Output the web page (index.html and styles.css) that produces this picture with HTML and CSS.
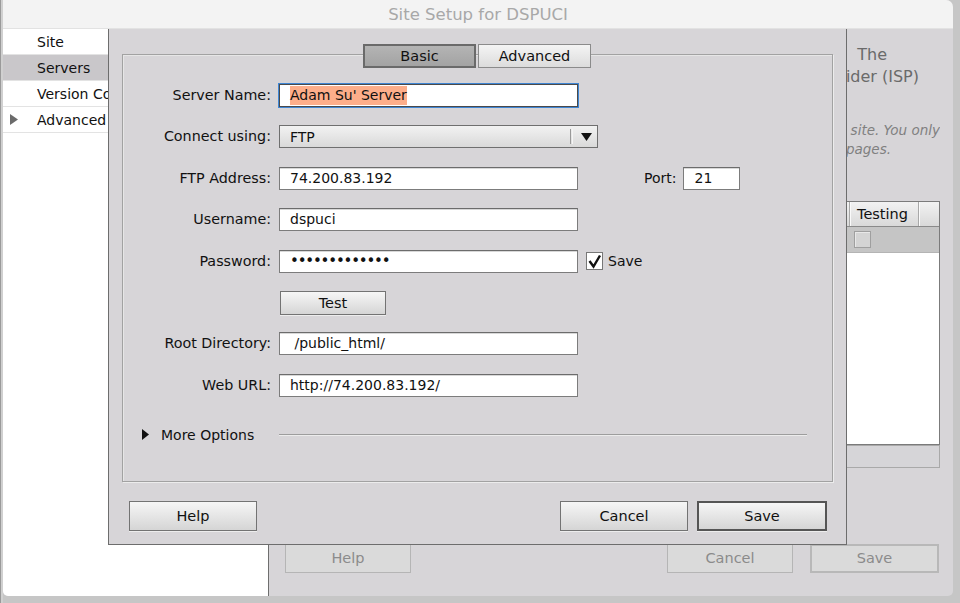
FILE: index.html
```html
<!DOCTYPE html>
<html>
<head>
<meta charset="utf-8">
<link rel="stylesheet" href="styles.css">
</head>
<body>
<div class="window">
  <div class="titlebar">Site Setup for DSPUCI</div>
  <div class="content">
    <div class="sidebar">
      <div class="navitem">Site</div>
      <div class="navitem selected">Servers</div>
      <div class="navitem">Version Control</div>
      <div class="navitem expander"><svg class="disclosure" width="8" height="11" viewBox="0 0 8 11"><path d="M0 0 L8 5.5 L0 11 Z" fill="#6b6b6b"/></svg>Advanced Settings</div>
    </div>
    <div class="main">
      <div class="desc l1"><span>Here you'll select the server that will host your pages on the web.<span class="gap">The</span></span></div>
      <div class="desc l2"><span>settings for this dialog box come from your Internet Service Provider (ISP)</span></div>
      <div class="note n1"><span>Note: You do not need to complete this step to begin working on your Dreamweaver web<span class="gap2">site. You only</span></span></div>
      <div class="note n2"><span>need to define a remote server when you want to connect to the web and post pages.</span></div>
      <div class="table">
        <div class="thead">
          <div class="th c-name">Name</div>
          <div class="th c-addr">Address</div>
          <div class="th c-conn">Connection</div>
          <div class="th c-remote">Remote</div>
          <div class="th c-test">Testing</div>
          <div class="th c-end"></div>
        </div>
        <div class="trow">
          <div class="td c-name"></div>
          <div class="td c-addr"></div>
          <div class="td c-conn"></div>
          <div class="td c-remote"></div>
          <div class="td c-test"><span class="tbox"></span></div>
        </div>
      </div>
      <div class="tablebar"></div>
      <div class="bgbuttons">
        <div class="bgbtn help">Help</div>
        <div class="bgright">
          <div class="bgbtn">Cancel</div>
          <div class="bgbtn def">Save</div>
        </div>
      </div>
    </div>
  </div>

  <div class="sheet">
    <div class="tabs">
      <div class="tab active">Basic</div>
      <div class="tab">Advanced</div>
    </div>
    <div class="groupbox">
      <div class="form">
        <div class="label">Server Name:</div>
        <div class="input focus"><span class="sel">Adam Su' Server</span></div>
        <div></div>

        <div class="label">Connect using:</div>
        <div class="select"><span class="selval">FTP</span><span class="divider"></span><svg class="arrow" width="11" height="8" viewBox="0 0 11 8"><path d="M0 0 H11 L5.5 8 Z" fill="#111"/></svg></div>

        <div class="label">FTP Address:</div>
        <div class="input">74.200.83.192</div>
        <div class="extra"><span class="portlabel">Port:</span><div class="input port">21</div></div>

        <div class="label">Username:</div>
        <div class="input">dspuci</div>
        <div></div>

        <div class="label">Password:</div>
        <div class="input pw">•••••••••••••</div>
        <div class="extra"><span class="check"><svg width="15" height="15" viewBox="0 0 15 15"><path d="M2.5 7 L6.5 12.5 L13 1.5" fill="none" stroke="#111" stroke-width="2.4"/></svg></span><span class="checklabel">Save</span></div>

        <div></div>
        <div class="btn test">Test</div>
        <div></div>

        <div class="label">Root Directory:</div>
        <div class="input">&nbsp;/public_html/</div>
        <div></div>

        <div class="label">Web URL:</div>
        <div class="input">http://74.200.83.192/</div>
        <div></div>
      </div>
      <div class="more">
        <svg width="7" height="11" viewBox="0 0 7 11"><path d="M0 0 L7 5.5 L0 11 Z" fill="#111"/></svg>
        <span class="moretext">More Options</span>
        <span class="moreline"></span>
      </div>
    </div>
    <div class="buttons">
      <div class="btn big">Help</div>
      <div class="right">
        <div class="btn big">Cancel</div>
        <div class="btn big default">Save</div>
      </div>
    </div>
  </div>
</div>
</body>
</html>
```
FILE: styles.css
```css
* { box-sizing: border-box; }
html, body { margin: 0; padding: 0; }
body {
  width: 960px;
  height: 603px;
  overflow: hidden;
  background: linear-gradient(to right, #9a9a9a 0, #9a9a9a 1px, #d0d0d0 1px, #d0d0d0 3px, #c6c6c6 3px);
  font-family: "DejaVu Sans", "Liberation Sans", sans-serif;
  font-size: 14px;
  color: #111;
}
.window {
  position: relative;
  margin-left: 3px;
  width: 950px;
  height: 596px;
  background: #d7d5d8;
  border-radius: 0 7px 5px 5px;
  overflow: hidden;
  display: flex;
  flex-direction: column;
}
.titlebar {
  height: 29px;
  flex: none;
  background: #f3f3f3;
  border-bottom: 1px solid #e2e2e2;
  color: #a8a8a8;
  font-size: 16.5px;
  line-height: 30px;
  text-align: center;
}
.content { flex: 1; display: flex; }
.sidebar {
  width: 266px;
  flex: none;
  background: #fff;
  border-right: 1px solid #6e6e6e;
}
.navitem {
  height: 26px;
  line-height: 26px;
  padding-left: 34px;
  border-bottom: 1px solid #e3e3e3;
  white-space: nowrap;
  overflow: hidden;
}
.navitem.selected { background: #c9c7ca; }
.navitem.expander { padding-left: 7px; display: flex; align-items: center; }
.disclosure { margin-right: 19px; flex: none; }

.main {
  flex: 1;
  padding: 15px 13px 0 16px;
  display: flex;
  flex-direction: column;
  min-width: 0;
}
.desc, .note {
  display: flex;
  justify-content: flex-end;
  white-space: nowrap;
  overflow: hidden;
}
.desc span, .note span { flex: none; }
.desc { font-size: 16px; line-height: 22px; color: #6a6a6a; }
.desc.l1 { padding-right: 53px; }
.desc .gap { margin-left: 12px; }
.note .gap2 { margin-left: 8px; }
.desc.l2 { padding-right: 21px; }
.note { font-size: 13.5px; line-height: 19px; color: #808080; font-style: italic; }
.note.n1 { margin-top: 33px; padding-right: 0; }
.note.n2 { padding-right: 49px; }

.table {
  margin-top: 42px;
  height: 244px;
  width: 655px;
  border: 1px solid #7b7b7b;
  background: #fff;
}
.thead {
  display: flex;
  height: 25px;
  background: linear-gradient(#f2f2f2, #d9d9d9);
  border-bottom: 1px solid #8a8a8a;
}
.th {
  line-height: 24px;
  padding-left: 7px;
  font-size: 14.5px;
}
.th + .th { border-left: 1px solid #a8a8a8; box-shadow: inset 1px 0 0 #fafafa; }
.c-name { width: 200px; }
.c-addr { width: 160px; }
.c-conn { width: 100px; }
.c-remote { width: 103px; }
.c-test { width: 69px; }
.c-end { flex: 1; }
.trow {
  display: flex;
  height: 26px;
  background: #c5c5c5;
  border-bottom: 1px solid #b4b4b4;
}
.td.c-test { display: flex; align-items: center; padding-left: 5px; }
.tbox {
  width: 17px;
  height: 17px;
  border: 1px solid #9f9f9f;
  background: #d4d4d4;
  box-shadow: inset 1px 1px 0 #e8e8e8;
}
.tablebar {
  margin-top: 0;
  height: 23px;
  width: 655px;
  border: 1px solid #a9a9a9;
  background: #d6d5d8;
}
.bgbuttons {
  margin-top: 76px;
  display: flex;
  justify-content: space-between;
  width: 654px;
}
.bgright { display: flex; gap: 17px; }
.bgbtn {
  width: 126px;
  height: 29px;
  line-height: 27px;
  text-align: center;
  color: #8b8b8b;
  background: #dadada;
  border: 1px solid #b5b5b5;
  font-size: 14.5px;
}
.bgbtn.def { width: 129px; border: 2px solid #b8b8b8; line-height: 25px; }

/* sheet dialog */
.sheet {
  position: absolute;
  left: 105px;
  top: 29px;
  width: 739px;
  height: 516px;
  background: #d7d5d8;
  border: 1px solid #6d6d6d;
  border-top: none;
  padding: 15px 13px 0 13px;
  display: flex;
  flex-direction: column;
}
.tabs {
  display: flex;
  justify-content: center;
  gap: 2px;
  position: relative;
  z-index: 1;
  padding-right: 1px;
}
.tab {
  width: 113px;
  height: 24px;
  line-height: 23px;
  text-align: center;
  font-size: 14.5px;
  border: 1px solid #8b8b8b;
  background: linear-gradient(#f4f4f4, #dcdcdc);
}
.tab.active {
  border: 2px solid #6a6a6a;
  line-height: 21px;
  background: linear-gradient(#b4b4b4, #a3a3a3);
}
.groupbox {
  margin-top: -14px;
  width: 711px;
  height: 428px;
  border: 1px solid #a2a2a2;
  box-shadow: 1px 1px 0 #ececec, inset 1px 1px 0 #e6e6e6;
  padding-top: 29px;
}
.form {
  display: grid;
  grid-template-columns: 148px 299px 1fr;
  grid-auto-rows: 23px;
  column-gap: 8px;
  row-gap: 18.4px;
}
.label {
  text-align: right;
  line-height: 23px;
  white-space: nowrap;
  font-size: 14.3px;
}
.input {
  height: 23px;
  background: #fff;
  border: 1px solid #7c7c7c;
  border-top-color: #6c6c6c;
  box-shadow: inset 0 1px 0 #d8d8d8;
  padding-left: 10px;
  line-height: 21px;
  white-space: nowrap;
  overflow: hidden;
}
.input.focus {
  border-color: #4a4a4a;
  box-shadow: 0 0 0 1px #3f86d4;
}
.sel { background: #fdae8a; padding: 1px 0 2px; }
.input.pw { font-size: 15px; letter-spacing: -1.2px; line-height: 20px; }
.select {
  grid-column: 2 / 4;
  width: 319px;
  height: 23px;
  border: 1px solid #6f6f6f;
  background: linear-gradient(#f2f2f2, #d9d9d9);
  display: flex;
  align-items: center;
  padding-left: 10px;
}
.selval { flex: 1; }
.divider {
  width: 3px;
  height: 15px;
  border-left: 1px solid #9a9a9a;
  border-right: 1px solid #f5f5f5;
  margin-right: 8px;
}
.arrow { margin-right: 5px; }
.extra { display: flex; align-items: center; }
.portlabel { margin-left: 58px; margin-right: 7px; }
.input.port { width: 57px; }
.check {
  width: 17px;
  height: 18px;
  border: 1px solid #777;
  background: #fff;
  display: flex;
  align-items: center;
  justify-content: center;
}
.checklabel { margin-left: 5px; }
.btn {
  text-align: center;
  border: 1px solid #737373;
  background: linear-gradient(#f6f6f6, #d5d5d5);
  box-shadow: 0 1px 0 #ededed;
  font-size: 14.5px;
}
.btn.test {
  width: 106px;
  height: 24px;
  line-height: 22px;
  margin-left: 1px;
}
.more {
  margin-top: 28px;
  height: 20px;
  display: flex;
  align-items: center;
  padding-left: 19px;
  padding-right: 25px;
}
.moretext { margin-left: 12px; }
.moreline {
  flex: 1;
  margin-left: 25px;
  height: 2px;
  border-top: 1px solid #9d9d9d;
  border-bottom: 1px solid #ececec;
}
.buttons {
  margin-top: 19px;
  display: flex;
  justify-content: space-between;
  padding-left: 7px;
  padding-right: 6px;
}
.buttons .right { display: flex; gap: 9px; }
.btn.big {
  width: 128px;
  height: 30px;
  line-height: 28px;
}
.btn.big.default {
  width: 130px;
  border: 2px solid #555;
  line-height: 26px;
}
```
